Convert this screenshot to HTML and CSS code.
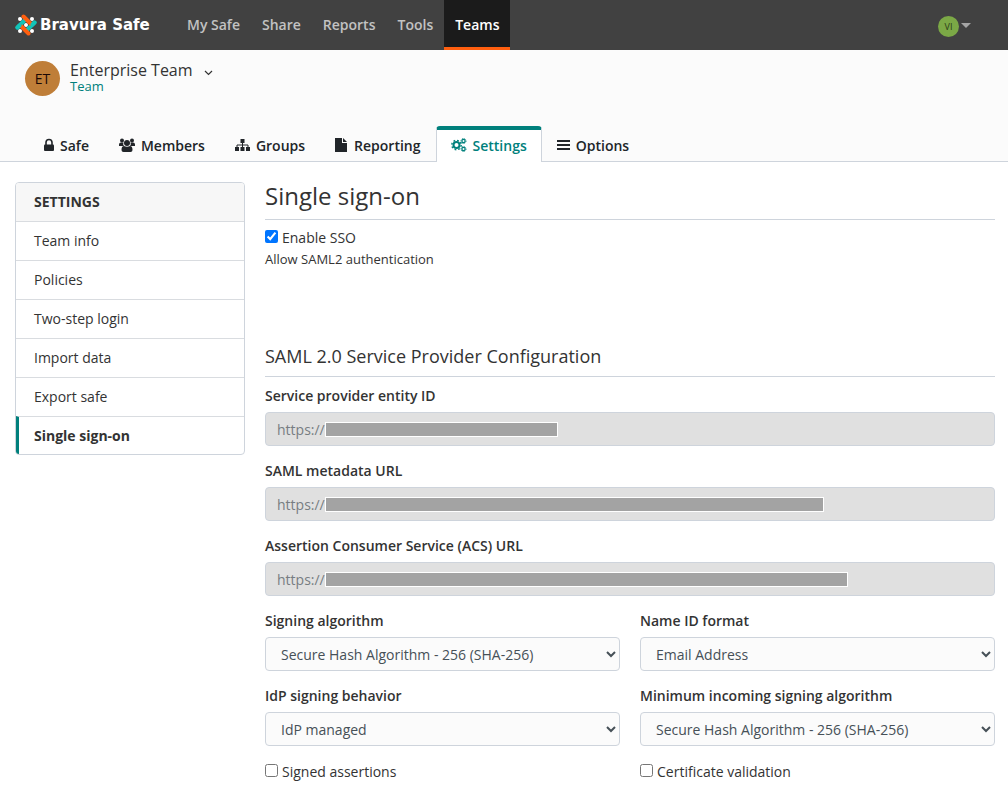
FILE: index.html
```html
<!DOCTYPE html>
<html lang="en">
<head>
  <meta charset="utf-8">
  <title>Bravura Safe</title>
  <link rel="stylesheet" href="styles.css">
</head>
<body>
  <header class="navbar">
    <a class="brand" href="#">
      <svg class="brand-mark" viewBox="0 0 22 22">
        <g fill="#fff">
          <circle cx="5" cy="5" r="2"/><circle cx="17" cy="5" r="2"/>
          <circle cx="5" cy="17" r="2"/><circle cx="17" cy="17" r="2"/>
          <circle cx="11" cy="11" r="2"/>
        </g>
        <g fill="none" stroke-width="4" stroke-linecap="round">
          <path d="M2.500 13.500L9.500 6.500M12.500 15.500L19.500 8.500" stroke="#12c4b8"/>
          <path d="M8.500 2.500L15.500 9.500M6.500 12.500L13.500 19.500" stroke="#ff5f0f"/>
          <path d="M17.500 10.500L19.500 8.500M2.500 13.500L4.500 11.500" stroke="#12c4b8"/>
        </g>
      </svg>
      <span>Bravura Safe</span>
    </a>
    <nav class="nav-links">
      <a href="#">My Safe</a>
      <a href="#">Share</a>
      <a href="#">Reports</a>
      <a href="#">Tools</a>
      <a href="#" class="active">Teams</a>
    </nav>
    <button class="account" aria-label="Account">
      <span class="account-avatar">VI</span>
      <span class="caret"></span>
    </button>
  </header>

  <div class="team-nav">
    <div class="team">
      <span class="team-avatar">ET</span>
      <div class="team-text">
        <button class="team-name">
          Enterprise Team
          <svg width="9" height="6" viewBox="0 0 9 6"><path d="M1 1l3.500 3.500L8 1" fill="none" stroke="#333" stroke-width="1.200"/></svg>
        </button>
        <span class="team-type">Team</span>
      </div>
    </div>
    <nav class="tabs">
      <a href="#">
        <svg width="10" height="14" viewBox="0 0 10 14"><path d="M2 7V4.500a3 3 0 0 1 6 0V7" fill="none" stroke="currentColor" stroke-width="1.600"/><rect x="0" y="6.500" width="10" height="6.500" rx="1"/></svg>
        Safe
      </a>
      <a href="#">
        <svg width="16" height="14" viewBox="0 0 16 14"><circle cx="3" cy="2.500" r="2"/><circle cx="13" cy="2.500" r="2"/><path d="M0 8V6.500Q0 4.500 2 4.500h2.500Q3.600 6.500 5 8zM16 8V6.500Q16 4.500 14 4.500h-2.500Q12.400 6.500 11 8z"/><circle cx="8" cy="5" r="3"/><path d="M2.500 12Q2.500 8 5 8q3 1.600 6 0 2.500 0 2.500 4 0 2-2 2h-7q-2 0-2-2z"/></svg>
        Members
      </a>
      <a href="#">
        <svg width="15" height="14" viewBox="0 0 15 14"><path d="M5.500 1h4v4h-4zM0 9h4v4H0zM5.500 9h4v4h-4zM11 9h4v4h-4z"/><path d="M7.500 4v6M2 10V7h11v3" fill="none" stroke="currentColor"/></svg>
        Groups
      </a>
      <a href="#">
        <svg width="13" height="14" viewBox="0 0 13 14"><path d="M0 0h7v5h5v9H0z"/><path d="M8 0l4 4H8z"/></svg>
        Reporting
      </a>
      <a href="#" class="active">
        <svg width="16" height="14" viewBox="0 0 16 14" fill="none" stroke="currentColor"><circle cx="5.500" cy="7" r="3" stroke-width="2"/><circle cx="5.500" cy="7" r="4.700" stroke-width="1.400" stroke-dasharray="1.800 1.890"/><circle cx="12.500" cy="3" r="1.600" stroke-width="1.200"/><circle cx="12.500" cy="3" r="2.500" stroke-dasharray="1 .96"/><circle cx="12.500" cy="11" r="1.600" stroke-width="1.200"/><circle cx="12.500" cy="11" r="2.500" stroke-dasharray="1 .96"/></svg>
        Settings
      </a>
      <a href="#">
        <svg width="13" height="14" viewBox="0 0 13 14"><path d="M0 2h13v2H0zM0 6h13v2H0zM0 10h13v2H0z"/></svg>
        Options
      </a>
    </nav>
  </div>

  <div class="container">
    <aside class="sidebar">
      <div class="sidebar-header">SETTINGS</div>
      <a href="#">Team info</a>
      <a href="#">Policies</a>
      <a href="#">Two-step login</a>
      <a href="#">Import data</a>
      <a href="#">Export safe</a>
      <a href="#" class="active">Single sign-on</a>
    </aside>

    <main>
      <h1>Single sign-on</h1>
      <form>
        <div class="check">
          <input type="checkbox" id="enableSso" checked>
          <label for="enableSso">Enable SSO</label>
        </div>
        <p class="hint">Allow SAML2 authentication</p>

        <h2>SAML 2.0 Service Provider Configuration</h2>
        <div class="form-group">
          <label for="entityId">Service provider entity ID</label>
          <div class="masked">
            <input type="text" id="entityId" value="https://" disabled>
            <span class="mask mask-short"></span>
          </div>
        </div>
        <div class="form-group">
          <label for="metadataUrl">SAML metadata URL</label>
          <div class="masked">
            <input type="text" id="metadataUrl" value="https://" disabled>
            <span class="mask mask-medium"></span>
          </div>
        </div>
        <div class="form-group">
          <label for="acsUrl">Assertion Consumer Service (ACS) URL</label>
          <div class="masked">
            <input type="text" id="acsUrl" value="https://" disabled>
            <span class="mask mask-long"></span>
          </div>
        </div>

        <div class="form-row">
          <div class="form-group">
            <label for="signing">Signing algorithm</label>
            <select id="signing"><option>Secure Hash Algorithm - 256 (SHA-256)</option></select>
          </div>
          <div class="form-group">
            <label for="nameId">Name ID format</label>
            <select id="nameId"><option>Email Address</option></select>
          </div>
          <div class="form-group">
            <label for="behavior">IdP signing behavior</label>
            <select id="behavior"><option>IdP managed</option></select>
          </div>
          <div class="form-group">
            <label for="minSigning">Minimum incoming signing algorithm</label>
            <select id="minSigning"><option>Secure Hash Algorithm - 256 (SHA-256)</option></select>
          </div>
          <div class="check">
            <input type="checkbox" id="signed">
            <label for="signed">Signed assertions</label>
          </div>
          <div class="check">
            <input type="checkbox" id="cert">
            <label for="cert">Certificate validation</label>
          </div>
        </div>
      </form>
    </main>
  </div>
</body>
</html>
```
FILE: styles.css
```css
* {
  box-sizing: border-box;
}

body {
  margin: 0;
  background: #fff;
  color: #333;
  font-family: "Open Sans", "Noto Sans", sans-serif;
  font-size: 14px;
  line-height: 21px;
}

a {
  color: inherit;
  text-decoration: none;
}

button {
  border: none;
  background: none;
  padding: 0;
  font: inherit;
  color: inherit;
  cursor: pointer;
}

/* Top bar */
.navbar {
  display: flex;
  align-items: center;
  height: 50px;
  padding: 0 37px 0 15px;
  background: #414141;
}

.brand {
  display: flex;
  align-items: center;
  gap: 3px;
  width: 161px;
  color: #fff;
  font-family: "DejaVu Sans", sans-serif;
  font-size: 15px;
  font-weight: bold;
  white-space: nowrap;
}

.brand-mark {
  width: 22px;
  height: 22px;
}

.nav-links {
  display: flex;
  height: 50px;
}

.nav-links a {
  padding: 14px 11px 0;
  border-bottom: 3px solid transparent;
  color: #c2c2c2;
  font-weight: 600;
}

.nav-links .active {
  background: #1b1b1b;
  border-color: #ff5f0f;
  color: #fff;
}

.account {
  display: flex;
  align-items: center;
  gap: 2px;
  margin-left: auto;
}

.account-avatar {
  width: 21px;
  height: 21px;
  margin-top: 3px;
  border-radius: 50%;
  background: #7ba846;
  color: #2b3b18;
  font-size: 9px;
  text-align: center;
}

.caret {
  border: 5px solid transparent;
  border-top-color: #a5a5a5;
  border-bottom: 0;
}

/* Team header */
.team-nav {
  padding: 11px 15px 0;
  border-bottom: 1px solid #ced4dc;
  background: #fbfbfb;
}

.team {
  display: flex;
  gap: 10px;
  height: 65px;
  padding-left: 10px;
}

.team-avatar {
  width: 35px;
  height: 35px;
  border-radius: 50%;
  background: #bf7e38;
  color: #1a0805;
  line-height: 35px;
  text-align: center;
}

.team-text {
  display: flex;
  flex-direction: column;
  align-items: flex-start;
}

.team-name {
  display: flex;
  align-items: center;
  gap: 11px;
  font-size: 16px;
  line-height: 19px;
}

.team-name svg {
  margin-top: 5px;
}

.team-type {
  color: #00807c;
  font-size: 13px;
  line-height: 13px;
}

.tabs {
  display: flex;
  margin-bottom: -1px;
  padding-left: 14px;
}

.tabs a {
  display: flex;
  align-items: center;
  gap: 6px;
  height: 36px;
  padding: 0 14px 2px;
  border: 1px solid transparent;
  border-top: 4px solid transparent;
  border-bottom: 0;
  border-radius: 4px 4px 0 0;
  color: #212529;
  font-weight: 600;
}

.tabs .active {
  background: #fff;
  border-color: #00807c #ced4dc;
  color: #00807c;
}

.tabs svg {
  fill: currentColor;
}

.tabs .active svg {
  fill: none;
}

/* Page body */
.container {
  display: flex;
  align-items: flex-start;
  gap: 20px;
  padding: 20px 13px 13px 15px;
}

.sidebar {
  flex: 0 0 230px;
  border: 1px solid #ced4dc;
  border-radius: 4px;
  overflow: hidden;
}

.sidebar-header {
  padding: 8px 18px 9px;
  background: #f7f7f7;
  font-weight: 700;
}

.sidebar a {
  display: block;
  padding: 8px 18px 9px;
  border-top: 1px solid #d9dce0;
}

.sidebar .active {
  padding-bottom: 8px;
  padding-left: 15px;
  border-left: 3px solid #00807c;
  font-weight: 700;
}

main {
  flex: 1;
}

h1, h2 {
  margin: 0;
  padding-bottom: 9px;
  border-bottom: 1px solid #ced4dc;
  font-weight: 400;
}

h1 {
  margin-bottom: 7px;
  font-size: 24px;
  line-height: 28px;
}

h2 {
  margin-bottom: 8px;
  font-size: 18px;
  line-height: 22px;
}

.check {
  display: flex;
  align-items: center;
  gap: 4px;
  margin-bottom: 1px;
}

.check input {
  width: 13px;
  height: 13px;
  margin: 0 0 2px;
}

.hint {
  margin: 0 0 75px;
  font-size: 13px;
}

.form-group {
  margin-bottom: 14px;
}

.form-group label {
  display: block;
  margin-bottom: 6px;
  font-weight: 600;
}

.form-group input,
.form-group select {
  display: block;
  width: 100%;
  height: 34px;
  border: 1px solid #ced4dc;
  border-radius: 4px;
  font: inherit;
}

.form-group input {
  padding: 0 11px;
  background: #e0e0e0;
  color: #777d82;
}

.form-group select {
  padding: 0 11px;
  background: #fbfbfb;
  color: #465057;
}

.masked {
  position: relative;
}

/* Bar covering the private part of a URL */
.mask {
  position: absolute;
  top: 10px;
  left: 60px;
  max-width: 90%;
  height: 15px;
  border: 1px solid #fff;
  background: #a3a3a3;
}

.mask-short {
  width: 233px;
}

.mask-medium {
  width: 499px;
}

.mask-long {
  width: 523px;
}

.form-row {
  display: grid;
  grid-template-columns: 1fr 1fr;
  column-gap: 20px;
}

.form-row .check {
  margin-top: 1px;
}
```
